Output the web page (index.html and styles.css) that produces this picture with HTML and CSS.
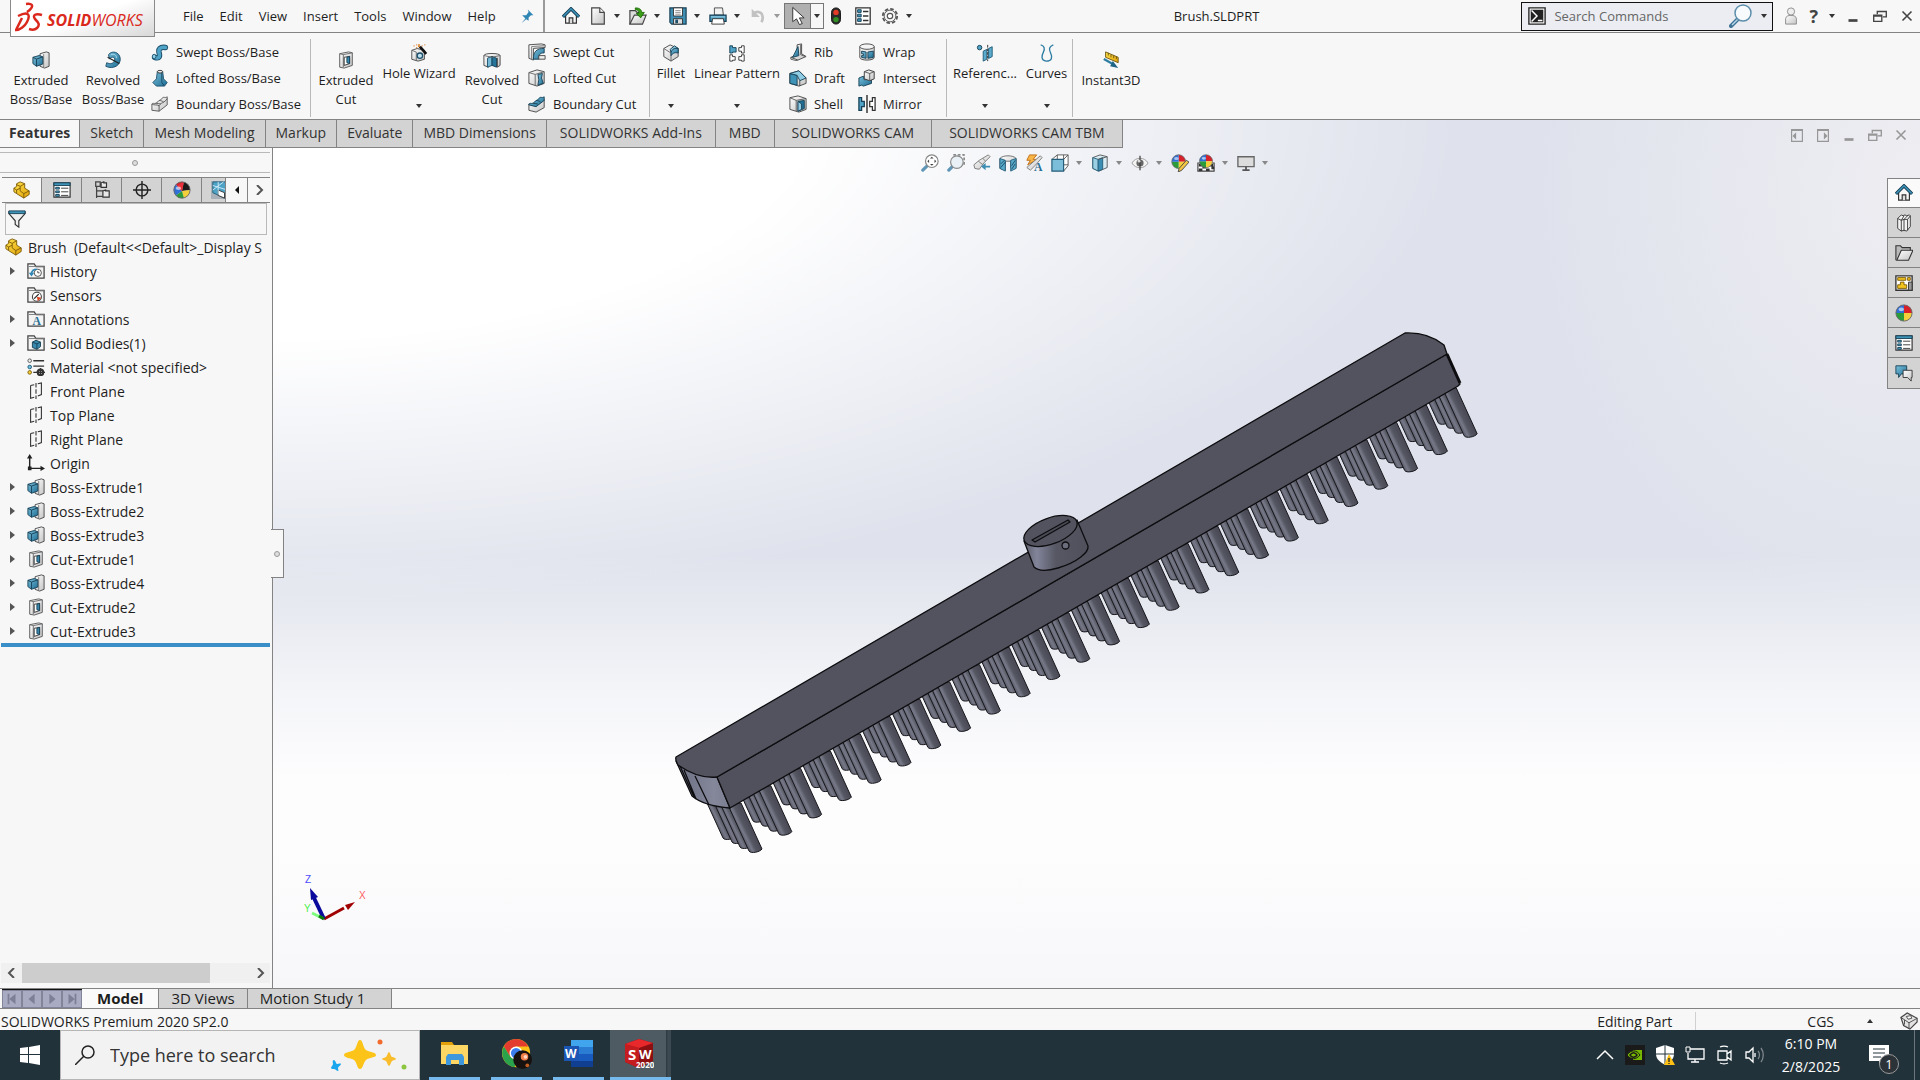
FILE: index.html
```html
<!DOCTYPE html>
<html lang="en">

<head>
    <meta charset="UTF-8">
    <meta name="viewport" content="width=device-width, initial-scale=1.0">
    <title>Brush.SLDPRT</title>
    <link rel="stylesheet" href="styles.css">
</head>

<body>
    <!-- icon sprite -->
    <svg class="sprite" aria-hidden="true">
        <defs>
            <linearGradient id="blue" x1="0" y1="0" x2="1" y2="1">
                <stop offset="0" stop-color="#7cc0dc" />
                <stop offset="1" stop-color="#1c6c93" />
            </linearGradient>
            <linearGradient id="grey" x1="0" y1="0" x2="1" y2="1">
                <stop offset="0" stop-color="#ffffff" />
                <stop offset="1" stop-color="#c4c4c4" />
            </linearGradient>
            <linearGradient id="gold" x1="0" y1="0" x2="1" y2="1">
                <stop offset="0" stop-color="#ffe34d" />
                <stop offset="1" stop-color="#e0a008" />
            </linearGradient>
        </defs>

        <symbol id="i-extrude" viewBox="0 0 20 20">
            <path d="M9 3l7-2 3 1v15l-5 2-5-2z" fill="url(#grey)" stroke="#444" />
            <path d="M13 3.500v15" stroke="#777" />
            <path d="M1 7l7-2 4 1.500v8L5 17l-4-3z" fill="url(#blue)" stroke="#173f55" />
            <path d="M1 7l4 2 7-2.500M5 9v8" fill="none" stroke="#173f55" />
        </symbol>
        <symbol id="i-revolve" viewBox="0 0 20 20">
            <path d="M5 4c4-5 12-3 13 4 1 8-8 13-16 9l1-4c4 2 8 1 9-3 0-4-4-4-6-1z" fill="url(#blue)" stroke="#1d4f6b" />
            <path d="M4 7l13 7" stroke="#222" stroke-width="1.300" />
            <path d="M8 4c4-1 6 1 6 4" fill="none" stroke="#b8e2f2" />
        </symbol>
        <symbol id="i-sweep" viewBox="0 0 20 20">
            <path d="M4 16c6 2 6-2 5-5-1-4 1-7 7-6" fill="none" stroke="#1d4f6b" stroke-width="6" stroke-linecap="round" />
            <path d="M4 16c6 2 6-2 5-5-1-4 1-7 7-6" fill="none" stroke="#4fa3c7" stroke-width="4" stroke-linecap="round" />
            <ellipse cx="3.500" cy="15" rx="2" ry="2.500" fill="#8fd0ea" stroke="#1d4f6b" />
        </symbol>
        <symbol id="i-loft" viewBox="0 0 20 20">
            <path d="M7 3h6l1 8 4 4-3 4-9 0-4-4 4-4z" fill="url(#blue)" stroke="#1d4f6b" />
            <path d="M12 3v12l3 4" fill="none" stroke="#174760" />
            <ellipse cx="10" cy="3" rx="3" ry="1.500" fill="#eee" stroke="#333" />
        </symbol>
        <symbol id="i-boundary" viewBox="0 0 20 20">
            <path d="M1 10c2-2 4 1 6-2s3-1 5-4 3 0 6-2v9l-9 7-8-1z" fill="url(#grey)" stroke="#555" />
            <path d="M1 10c3 2 5 0 8 2 2-4 6-3 9-8M9 12v6M5 9c2 0 4 1 6 1M9 6c2 0 4 1 5 2" fill="none" stroke="#555" />
        </symbol>
        <symbol id="i-boundary-cut" viewBox="0 0 20 20">
            <path d="M1 10l8 2 9-7v9l-9 5-8-2z" fill="url(#grey)" stroke="#444" />
            <path d="M1 10c2-2 4 1 6-2s3-1 5-4 3 0 6-2v4l-9 7-8-2z" fill="url(#blue)" stroke="#173f55" />
            <path d="M5 9c2 0 4 1 6 1M9 6c2 0 4 1 5 2" fill="none" stroke="#173f55" />
        </symbol>
        <symbol id="i-cut" viewBox="0 0 20 20">
            <path d="M3 3l10-2 4 1v14l-9 3-5-1z" fill="url(#grey)" stroke="#555" />
            <path d="M3 3l4 1v14M7 4l10-2" fill="none" stroke="#666" />
            <path d="M8 7l6-1v8l-6 2z" fill="#fff" stroke="#333" />
            <path d="M11 7l3-1v8l-3-1z" fill="#3889ad" stroke="#173f55" />
        </symbol>
        <symbol id="i-wizard" viewBox="0 0 20 20">
            <path d="M2 7l6-2 8 2v10l-7 2-7-2z" fill="url(#grey)" stroke="#444" />
            <path d="M2 7l5 2v10" fill="none" stroke="#666" />
            <circle cx="11" cy="13" r="3" fill="#bfe0ee" stroke="#1d4f6b" stroke-width="1.400" />
            <path d="M11 3l7 8" stroke="#111" stroke-width="3" />
            <path d="M4 2h1M7 1h1M7 4h1M13 2h1M16 1h1M10 0v2M9 3l2-1" stroke="#d87a1c" stroke-width="1.500" />
        </symbol>
        <symbol id="i-revcut" viewBox="0 0 20 20">
            <path d="M1 5c0-3 18-3 18 0v11l-3 2V8l-5 3-5-3v10l-5-2z" fill="url(#grey)" stroke="#444" />
            <path d="M5 8l5-2v10l-5 2z" fill="#73b9d6" stroke="#1d4f6b" />
            <path d="M10 6l5 2v10l-5-2z" fill="#25749a" stroke="#173f55" />
            <path d="M1 5l9 2 9-2" fill="none" stroke="#666" />
        </symbol>
        <symbol id="i-sweptcut" viewBox="0 0 20 20">
            <path d="M1 2l14-1 4 1v3L6 6v13l-5-2z" fill="url(#grey)" stroke="#444" />
            <path d="M4 4v14M4 4l14-1" fill="none" stroke="#777" />
            <path d="M6 18c0-8 3-12 12-12v5c-5 0-6 2-6 7z" fill="url(#blue)" stroke="#173f55" />
            <path d="M12 14h7v4h-7z" fill="#eee" stroke="#444" />
        </symbol>
        <symbol id="i-loftcut" viewBox="0 0 20 20">
            <path d="M1 4l9-3 8 2v13l-8 3-9-3z" fill="url(#grey)" stroke="#444" />
            <path d="M1 4l7 2v12M8 6l10-3" fill="none" stroke="#666" />
            <path d="M11 6l5-1-1 5 2 6-6 2 1-6z" fill="url(#blue)" stroke="#173f55" />
        </symbol>
        <symbol id="i-fillet" viewBox="0 0 20 20">
            <path d="M2 5l7-4 9 4v9l-8 5-8-5z" fill="url(#grey)" stroke="#444" />
            <path d="M2 5l8 5v9" fill="none" stroke="#666" />
            <path d="M10 10c0-3 2-6 8-5v5c-4-1-6 0-8 3z" fill="url(#blue)" stroke="#173f55" />
            <path d="M9 6l5-4 4 3c-4-1-6 0-8 4z" fill="#8fcbe3" stroke="#173f55" />
        </symbol>
        <symbol id="i-linpat" viewBox="0 0 20 20">
            <path d="M2 2h3v2h4v5H5v1H2z" fill="#4fa3c7" stroke="#173f55" />
            <path d="M18 2h-3v2h-3v4h3v2h3zM2 12h3v2h3v4H5v1H2zM18 12h-3v2h-3v4h3v1h3z" fill="#fff" stroke="#333" />
        </symbol>
        <symbol id="i-rib" viewBox="0 0 20 20">
            <path d="M9 2l5-1v11l5 3-9 4-8-3 7-3z" fill="url(#grey)" stroke="#444" />
            <path d="M10 4l1 10-7 2z" fill="url(#blue)" stroke="#173f55" />
            <path d="M13 2v11l5 2M2 16v2l8 2" fill="none" stroke="#555" />
        </symbol>
        <symbol id="i-draft" viewBox="0 0 20 20">
            <path d="M1 5l10-3 8 8v6l-8 3-10-3z" fill="url(#grey)" stroke="#444" />
            <path d="M1 5l8 2v11l-8-2z" fill="#3f93b7" stroke="#173f55" />
            <path d="M1 5l10-3 8 8-7 3-3-6z" fill="#8fcbe3" stroke="#173f55" />
            <path d="M12 13v6" stroke="#444" />
        </symbol>
        <symbol id="i-shell" viewBox="0 0 20 20">
            <path d="M1 3l9-2 9 3v12l-8 3-10-3z" fill="url(#grey)" stroke="#444" />
            <path d="M1 3l7 3v12M8 6l11-2" fill="none" stroke="#555" />
            <path d="M10 7l7-1v9l-7 3z" fill="#1f6f96" stroke="#173f55" />
            <path d="M10 7l4 3v6l-4 2z" fill="#8fcbe3" stroke="#173f55" />
        </symbol>
        <symbol id="i-wrap" viewBox="0 0 20 20">
            <path d="M2 4v12c0 4 16 4 16 0V4" fill="url(#grey)" stroke="#444" />
            <ellipse cx="10" cy="4" rx="8" ry="3" fill="#f4f4f4" stroke="#444" />
            <path d="M4 9l5 1v7l-5-1v-2h2v-2H4zM11 10l6-1v7l-6 1z" fill="url(#blue)" stroke="#173f55" />
        </symbol>
        <symbol id="i-intersect" viewBox="0 0 20 20">
            <path d="M1 10l5-2 1 4 8-1v5l-9 3-2-1-3 1z" fill="url(#blue)" stroke="#173f55" />
            <path d="M7 3l5-2 6 2v8l-5 2-6-2z" fill="url(#grey)" stroke="#333" />
            <path d="M7 3l6 2v8M13 5l5-2" fill="none" stroke="#555" />
        </symbol>
        <symbol id="i-mirror" viewBox="0 0 20 20">
            <path d="M1 3h3v4h3v6H4v4H1z" fill="#4fa3c7" stroke="#173f55" stroke-width="1.400" />
            <path d="M19 3h-3v4h-3v6h3v4h3z" fill="#fff" stroke="#333" stroke-width="1.400" />
            <path d="M10 0v20" stroke="#222" stroke-width="1.500" />
        </symbol>
        <symbol id="i-refgeo" viewBox="0 0 20 20">
            <circle cx="4" cy="4" r="2.500" fill="#4fa3c7" stroke="#173f55" />
            <path d="M8 8l4-2v11l-4 2zM14 5l4-2v11l-4 2z" fill="#5aabcd" stroke="#1d5877" />
            <path d="M13 1v18" stroke="#222" stroke-dasharray="3 1" />
        </symbol>
        <symbol id="i-curves" viewBox="0 0 20 20">
            <path d="M3 1c4 1 5 4 3 8s-3 9 3 10c7 0 7-5 5-9s-2-7 3-9" fill="none" stroke="#2e7ea3" stroke-width="1.500" />
        </symbol>
        <symbol id="i-instant" viewBox="0 0 20 20">
            <path d="M4 1l14 6v6L4 7z" fill="url(#gold)" stroke="#6d5310" />
            <path d="M7 2v3M10 4v3M13 5v3M16 6v3" stroke="#6d5310" />
            <path d="M2 9l11 6" stroke="#2e7ea3" stroke-width="2.500" />
            <path d="M12 11l6 8-9-2z" fill="#1f6385" />
        </symbol>

        <symbol id="i-pin" viewBox="0 0 20 20">
            <path d="M11 2l7 7-3 0-3 3 0 4-3-2-6 5 5-6-4-4 5 0 3-4z" fill="#2f86b3" />
        </symbol>
        <symbol id="i-home" viewBox="0 0 20 20">
            <path d="M4 9v9h12V9l-6-6z" fill="#f6f6f6" stroke="#333" stroke-width="1.300" />
            <path d="M8 18v-6h4v6" fill="#ddd" stroke="#333" stroke-width="1.300" />
            <path d="M1 11l9-9 9 9" fill="none" stroke="#153c52" stroke-width="3.600" />
            <path d="M1.500 10.500l8.500-8.500 8.500 8.500" fill="none" stroke="#3b93bb" stroke-width="1.800" />
        </symbol>
        <symbol id="i-new" viewBox="0 0 20 20">
            <path d="M3 1h9l5 5v13H3z" fill="url(#grey)" stroke="#444" stroke-width="1.300" />
            <path d="M12 1v5h5" fill="#fff" stroke="#444" stroke-width="1.300" />
        </symbol>
        <symbol id="i-open" viewBox="0 0 20 20">
            <path d="M1 19V4h6l2 2h4v4" fill="#ddd" stroke="#444" stroke-width="1.300" />
            <path d="M1 19L6 9h13l-4 10z" fill="url(#grey)" stroke="#444" stroke-width="1.300" />
            <path d="M7 1c5 0 7 2 7 5h3l-4 6-5-5h3c0-3-1-4-4-4z" fill="#3aa017" stroke="#1d6a08" />
        </symbol>
        <symbol id="i-save" viewBox="0 0 20 20">
            <path d="M1 1h18v18H3l-2-2z" fill="#3f8fb3" stroke="#173f55" stroke-width="1.300" />
            <path d="M5 1h10v9H5z" fill="#fff" stroke="#333" />
            <path d="M7 4h6M7 6h6M7 8h6" stroke="#888" />
            <path d="M5 13h10v6H5z" fill="#ddd" stroke="#333" />
            <path d="M7 14h3v4H7z" fill="#1d4f6b" />
        </symbol>
        <symbol id="i-print" viewBox="0 0 20 20">
            <path d="M6 9V1h9l1 8z" fill="#f2f2f2" stroke="#444" />
            <path d="M1 9h18v7H1z" fill="#4797ba" stroke="#173f55" stroke-width="1.300" />
            <path d="M4 13h12l1 6H3z" fill="#fff" stroke="#333" />
            <path d="M2 11h16" stroke="#a9dcf0" />
        </symbol>
        <symbol id="i-undo" viewBox="0 0 20 20">
            <path d="M5 7c6-4 13 0 9 10" fill="none" stroke="#c2c2c2" stroke-width="3" />
            <path d="M3 2v9h9z" fill="#c2c2c2" />
        </symbol>
        <symbol id="i-cursor" viewBox="0 0 20 20">
            <path d="M5 1v15l4-3 3 6 3-1-3-6h5z" fill="#fff" stroke="#333" />
        </symbol>
        <symbol id="i-traffic" viewBox="0 0 20 20">
            <rect x="5" y="1" width="10" height="18" rx="5" fill="#2b2b2b" stroke="#111" />
            <circle cx="10" cy="6" r="3" fill="#e33b27" />
            <circle cx="10" cy="14" r="3" fill="#2f8f22" />
        </symbol>
        <symbol id="i-options" viewBox="0 0 20 20">
            <path d="M2 1h16v18H2z" fill="#fff" stroke="#333" stroke-width="1.400" />
            <path d="M4 3h4v3H4zM4 8h4v3H4zM4 13h4v3H4z" fill="#3f93b7" stroke="#173f55" />
            <path d="M10 5h6M10 10h6M10 15h6" stroke="#333" stroke-width="1.400" />
        </symbol>
        <symbol id="i-gear" viewBox="0 0 20 20">
            <circle cx="10" cy="10" r="8" fill="none" stroke="#555" stroke-width="2" stroke-dasharray="4 2.280" />
            <circle cx="10" cy="10" r="6.500" fill="#f4f4f4" stroke="#555" />
            <circle cx="10" cy="10" r="3" fill="#fff" stroke="#555" stroke-width="1.300" />
        </symbol>
        <symbol id="i-prompt" viewBox="0 0 20 20">
            <path d="M1 1h18v18H1z" fill="#fff" stroke="#222" stroke-width="1.500" />
            <path d="M3 3h14v14H3z" fill="#222" />
            <path d="M4 4l6 6-6 6M11 15h5" fill="none" stroke="#fff" stroke-width="1.600" />
        </symbol>
        <symbol id="i-lens" viewBox="0 0 24 24">
            <path d="M9 15l-7 7" stroke="#3f7396" stroke-width="4" stroke-linecap="round" />
            <path d="M9 15l-6 6" stroke="#b6d8ea" stroke-width="1.500" />
            <circle cx="14" cy="9" r="8" fill="#f7fbfd" stroke="#5d8eab" stroke-width="1.500" />
        </symbol>
        <symbol id="i-user" viewBox="0 0 20 20">
            <path d="M4 19v-6c0-5 12-5 12 0v6z" fill="url(#grey)" stroke="#888" />
            <circle cx="10" cy="5" r="4" fill="#eee" stroke="#888" />
        </symbol>
        <symbol id="i-min" viewBox="0 0 20 20">
            <path d="M5 15h10" stroke="currentColor" stroke-width="3" />
        </symbol>
        <symbol id="i-restore" viewBox="0 0 20 20">
            <path d="M7 8V5h10v6h-4M7 5h10" fill="none" stroke="currentColor" stroke-width="1.500" />
            <path d="M3 9h9v7H3zM3 10h9" fill="none" stroke="currentColor" stroke-width="1.500" />
        </symbol>
        <symbol id="i-close" viewBox="0 0 20 20">
            <path d="M5 5l10 10M15 5L5 15" stroke="currentColor" stroke-width="1.800" />
        </symbol>
        <symbol id="i-pane-left" viewBox="0 0 20 20">
            <path d="M4 4h12v13H4zM4 5h12" fill="none" stroke="currentColor" stroke-width="1.300" />
            <path d="M9 7v8l-4-4z" fill="currentColor" />
        </symbol>
        <symbol id="i-pane-right" viewBox="0 0 20 20">
            <path d="M4 4h12v13H4zM4 5h12" fill="none" stroke="currentColor" stroke-width="1.300" />
            <path d="M11 7v8l4-4z" fill="currentColor" />
        </symbol>

        <symbol id="i-part" viewBox="0 0 20 20">
            <path d="M1 8l3-2V3l4-2 5 2v5l5 3v4l-6 4-8-5-3-2z" fill="url(#gold)" stroke="#7a5a08" />
            <path d="M4 4l4 2 5-3M8 6v5l4 3 6-3M12 14v5M1 8l3 2 4-2M4 10v4" fill="none" stroke="#7a5a08" />
        </symbol>
        <symbol id="i-props" viewBox="0 0 20 20">
            <path d="M1 2h18v16H1z" fill="#fff" stroke="#333" stroke-width="1.300" />
            <path d="M1 2h18v3H1z" fill="#3f93b7" stroke="#173f55" />
            <path d="M3 7h4v2H3zM3 11h4v2H3zM3 15h4v2H3z" fill="#4fa3c7" stroke="#173f55" />
            <path d="M9 8h8M9 12h8M9 16h8" stroke="#333" />
        </symbol>
        <symbol id="i-config" viewBox="0 0 20 20">
            <path d="M3 1h5v5H3zM4 6v13M4 11h7M4 17h7M8 4h3" fill="none" stroke="#444" stroke-width="1.400" />
            <path d="M9 7V2l3-1v1h3v5zM11 18v-7l3-1v1h4v7z" fill="#e8e8e8" stroke="#333" stroke-width="1.300" />
        </symbol>
        <symbol id="i-target" viewBox="0 0 20 20">
            <circle cx="10" cy="10" r="6.500" fill="none" stroke="#222" stroke-width="1.600" />
            <path d="M10 0v20M0 10h20" stroke="#222" stroke-width="1.600" />
        </symbol>
        <symbol id="i-ball" viewBox="0 0 20 20">
            <path d="M10 10V1a9 9 0 0 1 9 9z" fill="#d8202a" />
            <path d="M10 10h9a9 9 0 0 1-9 9z" fill="#f3cf3c" />
            <path d="M10 10v9a9 9 0 0 1-9-9z" fill="#2c9b3a" />
            <path d="M10 10H1a9 9 0 0 1 9-9z" fill="#2f6fd6" />
            <circle cx="10" cy="10" r="9" fill="none" stroke="#666" />
            <ellipse cx="7" cy="6" rx="3" ry="2" fill="#fff" opacity=".6" />
        </symbol>
        <symbol id="i-appearance" viewBox="0 0 20 20">
            <path d="M10 11L3 4a9 9 0 0 1 9-3z" fill="#d8202a" />
            <path d="M10 11l2-10a9 9 0 0 1 7 9z" fill="#1b1b1b" />
            <path d="M10 11l9-1a9 9 0 0 1-7 9z" fill="#f3cf3c" />
            <path d="M10 11l2 8a9 9 0 0 1-9-3z" fill="#2c9b3a" />
            <path d="M10 11l-7 5a9 9 0 0 1 0-12z" fill="#2f6fd6" />
            <path d="M10 11L5 7a7 7 0 0 1 7-5z" fill="#e8303a" />
            <circle cx="10" cy="10" r="9" fill="none" stroke="#666" />
            <ellipse cx="6" cy="8" rx="3" ry="2" fill="#fff" opacity=".6" />
        </symbol>
        <symbol id="i-cube" viewBox="0 0 20 20">
            <path d="M0 0h20v20H0z" fill="#a9b0b8" />
            <path d="M2 1h16v9l-3 9-13-6z" fill="#4fa3c7" stroke="#245d79" />
            <path d="M8 10l7 3v6l-7-3z" fill="#fff" stroke="#333" />
            <path d="M2 5l16 5M8 1v14M2 10l12-9" fill="none" stroke="#d4edf7" />
        </symbol>
        <symbol id="i-filter" viewBox="0 0 20 20">
            <path d="M1 2h18v2l-7 8v7l-4-3v-4L1 4z" fill="#f0f0f0" stroke="#333" stroke-width="1.300" />
            <path d="M1 1h18v3H1z" fill="#3f93b7" stroke="#173f55" />
        </symbol>
        <symbol id="i-folder" viewBox="0 0 20 20">
            <path d="M1 18V2h7l2 3h9v13z" fill="#f3f3f3" stroke="#444" stroke-width="1.400" />
            <path d="M2 5h17" stroke="#777" />
        </symbol>
        <symbol id="i-history" viewBox="0 0 20 20">
            <use href="#i-folder" />
            <circle cx="12" cy="12" r="4" fill="#fff" stroke="#444" />
            <path d="M12 10v2h2" fill="none" stroke="#444" />
            <path d="M5 14c0-5 3-6 6-6" fill="none" stroke="#2f86b3" stroke-width="1.800" />
            <path d="M2 12h6l-3 4z" fill="#2f86b3" />
        </symbol>
        <symbol id="i-sensors" viewBox="0 0 20 20">
            <use href="#i-folder" />
            <circle cx="11" cy="12" r="5" fill="#fff" stroke="#444" stroke-width="1.200" />
            <path d="M11 12l5 1-4 4z" fill="#d8431f" />
            <path d="M8 14l5-5" stroke="#222" stroke-width="1.400" />
        </symbol>
        <symbol id="i-bodies" viewBox="0 0 20 20">
            <use href="#i-folder" />
            <path d="M6 9l4-2 5 2v5l-4 3-5-2z" fill="#3889ad" stroke="#173f55" />
            <path d="M6 9l5 2v6M11 11l4-2" fill="none" stroke="#173f55" />
        </symbol>
        <symbol id="i-material" viewBox="0 0 20 20">
            <circle cx="3" cy="3" r="2" fill="#eee" stroke="#555" />
            <circle cx="3" cy="10" r="2" fill="#6fc0e0" stroke="#1d5877" />
            <circle cx="3" cy="16" r="2" fill="#f3cf3c" stroke="#7a5a08" />
            <path d="M7 3h12M7 9h12M7 16h4" stroke="#333" stroke-width="1.500" />
            <circle cx="15" cy="16" r="3" fill="none" stroke="#333" stroke-width="2.500" />
            <path d="M15 11v10M10 16h10" stroke="#333" stroke-width="1.500" />
        </symbol>
        <symbol id="i-plane" viewBox="0 0 20 20">
            <path d="M4 4l4-1M12 2l4-1v13l-4 1.500M8 17l-4 1V4" fill="none" stroke="#333" stroke-width="1.200" />
            <path d="M10 1v18" stroke="#333" stroke-width="1.200" stroke-dasharray="5 2" />
        </symbol>
        <symbol id="i-origin" viewBox="0 0 20 20">
            <path d="M3 3v13h14" fill="none" stroke="#222" stroke-width="1.600" />
            <path d="M3 0l3 5H0zM20 16l-5 3v-6zM1 14h4v4H1z" fill="#222" />
        </symbol>

        <symbol id="i-zoomfit" viewBox="0 0 20 20">
            <path d="M8 12l-6 6" stroke="#5f95b5" stroke-width="3.500" stroke-linecap="round" />
            <circle cx="12" cy="8" r="7" fill="#fff" stroke="#888" stroke-width="1.300" />
            <path d="M12 3l2 2h-4zM12 13l2-2h-4zM7 8l2-2v4zM17 8l-2-2v4z" fill="#444" />
        </symbol>
        <symbol id="i-zoomarea" viewBox="0 0 20 20">
            <path d="M7 1h12v12" fill="none" stroke="#666" stroke-dasharray="3 2" stroke-width="1.400" />
            <path d="M7 13l-5 5" stroke="#5f95b5" stroke-width="3.500" stroke-linecap="round" />
            <circle cx="11" cy="9" r="7" fill="#e9f1f6" stroke="#888" stroke-width="1.300" />
        </symbol>
        <symbol id="i-prev" viewBox="0 0 20 20">
            <path d="M1 12l6-5L17 1l2 2-7 7-5 7-5-1z" fill="url(#grey)" stroke="#777" />
            <path d="M6 8l5 4M11 5l3 3" stroke="#777" />
            <path d="M19 15h-5v3l-5-4 5-4v3h5z" fill="#3b8db4" />
        </symbol>
        <symbol id="i-section" viewBox="0 0 20 20">
            <path d="M1 5c3-4 15-4 18 0v10h-6V8H7v10l-6-2z" fill="url(#grey)" stroke="#666" />
            <path d="M1 5l6 2v12l-6-3zM13 7l6-2v11l-6 3z" fill="#5aaccd" stroke="#245d79" />
            <path d="M2 11l4-4M2 15l5-6M14 13l4-6M14 17l4-6" stroke="#174760" />
        </symbol>
        <symbol id="i-orient" viewBox="0 0 20 20">
            <path d="M1 6l6-5h12v12l-5 6M14 6l5-5M7 1v5M14 12h5M14 1v5" fill="#fff" stroke="#555" />
            <path d="M1 6h13v13H1z" fill="#7cbdd9" stroke="#245d79" stroke-width="1.300" />
        </symbol>
        <symbol id="i-style" viewBox="0 0 20 20">
            <path d="M2 4l8-3 8 2v12l-9 4-7-3z" fill="#d8ebf3" stroke="#555" />
            <path d="M2 4l6 2v13l-6-3z" fill="#9ccfe4" stroke="#245d79" />
            <path d="M8 6l5-2v13l-5 2z" fill="#3b8db4" stroke="#245d79" />
            <path d="M8 6l10-3" stroke="#555" />
        </symbol>
        <symbol id="i-eye" viewBox="0 0 20 20">
            <path d="M1 10c4-7 14-7 18 0-4 7-14 7-18 0z" fill="#f4f4f4" stroke="#999" />
            <circle cx="10" cy="10" r="4" fill="#666" />
            <path d="M10 2v16" stroke="#444" stroke-width="1.400" />
            <circle cx="9" cy="8" r="1.500" fill="#ddd" />
        </symbol>
        <symbol id="i-editapp" viewBox="0 0 20 20">
            <g transform="scale(.85)">
                <use href="#i-ball" width="20" height="20" />
            </g>
            <path d="M17 7l3 2-8 9-4 2 1-4z" fill="#f3c545" stroke="#444" />
        </symbol>
        <symbol id="i-scene" viewBox="0 0 20 20">
            <path d="M1 10h18v9H1z" fill="#fff" stroke="#444" stroke-width="1.300" />
            <path d="M2 11h4v3H2zM14 11h4v3h-4zM6 14h4v2H6zM10 16h4v3h-4zM2 16h4v3H2zM16 14h3v3h-3z" fill="#333" />
            <g transform="translate(2 0) scale(.8)">
                <use href="#i-ball" width="20" height="20" />
            </g>
        </symbol>
        <symbol id="i-monitor" viewBox="0 0 20 20">
            <path d="M1 3h18v11H1z" fill="#dcdcdc" stroke="#666" stroke-width="1.500" />
            <path d="M10 14v3M6 18h8" stroke="#555" stroke-width="2" />
        </symbol>

        <symbol id="i-books" viewBox="0 0 20 20">
            <path d="M3 5l4-4 2 1 2-1 2 1 3-1 1 1v12l-4 5-3-1-3 1-4-3z" fill="#f3f3f3" stroke="#333" />
            <path d="M3 5l4 2v12M7 7l3-1v13M10 6l4 0v12M7 7l3-5M10 6l4-4M14 6l3-4" fill="none" stroke="#333" />
        </symbol>
        <symbol id="i-folder-open" viewBox="0 0 20 20">
            <path d="M1 18V2h5l2 2h9v3" fill="#bbb" stroke="#333" stroke-width="1.200" />
            <path d="M2 18L7 7h13l-5 11z" fill="url(#grey)" stroke="#333" stroke-width="1.200" />
        </symbol>
        <symbol id="i-palette" viewBox="0 0 20 20">
            <path d="M1 2h18v16H1z" fill="#fff" stroke="#333" stroke-width="1.500" />
            <path d="M3 4h9v3H3zM14 4h3v3h-3zM6 9h4v3h3v4H3v-4h3z" fill="#f3c41e" stroke="#7a5a08" />
            <path d="M15 9h4v9h-4z" fill="#999" stroke="#333" />
        </symbol>
        <symbol id="i-forum" viewBox="0 0 20 20">
            <path d="M1 2h12v9H7l-3 4v-4H1z" fill="url(#blue)" stroke="#173f55" />
            <path d="M9 7h10v8h-1v4l-4-4H9z" fill="url(#grey)" stroke="#333" />
        </symbol>
        <symbol id="i-tag" viewBox="0 0 20 20">
            <path d="M1 6l7-5 11 6v4l-8 8-7-4z" fill="#e3e3e3" stroke="#444" stroke-width="1.300" />
            <path d="M1 6l9 6 9-5M10 12v6M5 9v5" fill="none" stroke="#444" />
            <path d="M7 5l5-1 1 3-4 1z" fill="#fff" stroke="#444" />
        </symbol>
    </svg>

    <header class="titlebar">
        <div class="logo">
            <svg class="logo-mark" viewBox="0 0 30 30">
                <path d="M11 2c8-1 8 3 1 8M3 14c10-5 13-2 9 6-2 4-7 8-11 8l6-12M27 13c-6-2-10 0-7 4 4 4 5 6 2 9-2 2-5 2-8 1" fill="none" stroke="#da291c" stroke-width="2.500" />
            </svg>
            <span><b>SOLID</b>WORKS</span>
        </div>
        <nav class="menu">
            <button>File</button>
            <button>Edit</button>
            <button>View</button>
            <button>Insert</button>
            <button>Tools</button>
            <button>Window</button>
            <button>Help</button>
        </nav>
        <button class="pin" aria-label="Pin menu"><svg class="icon"><use href="#i-pin" /></svg></button>
        <div class="quick">
            <button aria-label="Home"><svg class="icon"><use href="#i-home" /></svg></button>
            <button aria-label="New"><svg class="icon"><use href="#i-new" /></svg><i class="caret"></i></button>
            <button aria-label="Open"><svg class="icon"><use href="#i-open" /></svg><i class="caret"></i></button>
            <button aria-label="Save"><svg class="icon"><use href="#i-save" /></svg><i class="caret"></i></button>
            <button aria-label="Print"><svg class="icon"><use href="#i-print" /></svg><i class="caret"></i></button>
            <button aria-label="Undo"><svg class="icon"><use href="#i-undo" /></svg><i class="caret caret-dim"></i></button>
            <button class="select-tool" aria-label="Select"><svg class="icon"><use href="#i-cursor" /></svg><i class="caret"></i></button>
            <button aria-label="Rebuild"><svg class="icon"><use href="#i-traffic" /></svg></button>
            <button aria-label="File properties"><svg class="icon"><use href="#i-options" /></svg></button>
            <button aria-label="Options"><svg class="icon"><use href="#i-gear" /></svg><i class="caret"></i></button>
        </div>
        <h1 class="doc-title">Brush.SLDPRT</h1>
        <div class="command-search">
            <svg class="icon"><use href="#i-prompt" /></svg>
            <input type="text" placeholder="Search Commands" aria-label="Search Commands">
            <button aria-label="Search"><svg class="lens"><use href="#i-lens" /></svg></button>
            <i class="caret"></i>
        </div>
        <div class="window-controls">
            <button aria-label="Sign in"><svg class="icon"><use href="#i-user" /></svg></button>
            <button class="help">?<i class="caret"></i></button>
            <button aria-label="Minimize"><svg class="icon"><use href="#i-min" /></svg></button>
            <button aria-label="Restore"><svg class="icon"><use href="#i-restore" /></svg></button>
            <button aria-label="Close"><svg class="icon"><use href="#i-close" /></svg></button>
        </div>
    </header>

    <section class="ribbon">
        <div class="ribbon-group group-boss">
            <button class="tool"><svg class="icon"><use href="#i-extrude" /></svg>Extruded<br>Boss/Base</button>
            <button class="tool"><svg class="icon"><use href="#i-revolve" /></svg>Revolved<br>Boss/Base</button>
            <div class="stack">
                <button><svg class="icon"><use href="#i-sweep" /></svg>Swept Boss/Base</button>
                <button><svg class="icon"><use href="#i-loft" /></svg>Lofted Boss/Base</button>
                <button><svg class="icon"><use href="#i-boundary" /></svg>Boundary Boss/Base</button>
            </div>
        </div>
        <div class="ribbon-group group-cut">
            <button class="tool"><svg class="icon"><use href="#i-cut" /></svg>Extruded<br>Cut</button>
            <button class="tool tool-menu"><svg class="icon"><use href="#i-wizard" /></svg>Hole Wizard<i class="caret"></i></button>
            <button class="tool"><svg class="icon"><use href="#i-revcut" /></svg>Revolved<br>Cut</button>
            <div class="stack">
                <button><svg class="icon"><use href="#i-sweptcut" /></svg>Swept Cut</button>
                <button><svg class="icon"><use href="#i-loftcut" /></svg>Lofted Cut</button>
                <button><svg class="icon"><use href="#i-boundary-cut" /></svg>Boundary Cut</button>
            </div>
        </div>
        <div class="ribbon-group group-feature">
            <button class="tool tool-menu tool-small"><svg class="icon"><use href="#i-fillet" /></svg>Fillet<i class="caret"></i></button>
            <button class="tool tool-menu tool-wide"><svg class="icon"><use href="#i-linpat" /></svg>Linear Pattern<i class="caret"></i></button>
            <div class="stack">
                <button><svg class="icon"><use href="#i-rib" /></svg>Rib</button>
                <button><svg class="icon"><use href="#i-draft" /></svg>Draft</button>
                <button><svg class="icon"><use href="#i-shell" /></svg>Shell</button>
            </div>
            <div class="stack">
                <button><svg class="icon"><use href="#i-wrap" /></svg>Wrap</button>
                <button><svg class="icon"><use href="#i-intersect" /></svg>Intersect</button>
                <button><svg class="icon"><use href="#i-mirror" /></svg>Mirror</button>
            </div>
        </div>
        <div class="ribbon-group group-reference">
            <button class="tool tool-menu"><svg class="icon"><use href="#i-refgeo" /></svg>Referenc...<i class="caret"></i></button>
            <button class="tool tool-menu tool-small"><svg class="icon"><use href="#i-curves" /></svg>Curves<i class="caret"></i></button>
        </div>
        <div class="ribbon-group">
            <button class="tool"><svg class="icon"><use href="#i-instant" /></svg>Instant3D</button>
        </div>
    </section>

    <main class="workspace">
        <div class="tab-row">
            <nav class="command-tabs">
                <button class="active">Features</button>
                <button>Sketch</button>
                <button>Mesh Modeling</button>
                <button>Markup</button>
                <button>Evaluate</button>
                <button>MBD Dimensions</button>
                <button class="addin">SOLIDWORKS Add-Ins</button>
                <button class="addin">MBD</button>
                <button class="cam">SOLIDWORKS CAM</button>
                <button class="cam">SOLIDWORKS CAM TBM</button>
            </nav>
            <div class="doc-controls">
                <button aria-label="Collapse left"><svg class="icon"><use href="#i-pane-left" /></svg></button>
                <button aria-label="Collapse right"><svg class="icon"><use href="#i-pane-right" /></svg></button>
                <button aria-label="Minimize document"><svg class="icon"><use href="#i-min" /></svg></button>
                <button aria-label="Restore document"><svg class="icon"><use href="#i-restore" /></svg></button>
                <button aria-label="Close document"><svg class="icon"><use href="#i-close" /></svg></button>
            </div>
        </div>

        <div class="split">
            <aside class="manager">
                <div class="grip"><i class="dot"></i></div>
                <nav class="manager-tabs">
                    <button class="active" aria-label="FeatureManager"><svg class="icon"><use href="#i-part" /></svg></button>
                    <button aria-label="PropertyManager"><svg class="icon"><use href="#i-props" /></svg></button>
                    <button aria-label="ConfigurationManager"><svg class="icon"><use href="#i-config" /></svg></button>
                    <button aria-label="DimXpertManager"><svg class="icon"><use href="#i-target" /></svg></button>
                    <button aria-label="DisplayManager"><svg class="icon"><use href="#i-appearance" /></svg></button>
                    <button class="cropped" aria-label="CAM"><svg class="icon"><use href="#i-cube" /></svg></button>
                    <button class="scroll-tabs" aria-label="Previous tab"><i class="arrow-left"></i></button>
                    <button class="more-tabs" aria-label="Next tab"><svg class="chevron" viewBox="0 0 10 10"><path d="M3 0l5 5-5 5" /></svg></button>
                </nav>
                <label class="filter">
                    <svg class="icon"><use href="#i-filter" /></svg>
                    <input type="text" aria-label="Filter">
                </label>
                <ul class="tree">
                    <li class="root"><svg class="icon"><use href="#i-part" /></svg>Brush&nbsp; (Default&lt;&lt;Default&gt;_Display S</li>
                    <li><button class="twist" aria-label="Expand"></button><svg class="icon"><use href="#i-history" /></svg>History</li>
                    <li class="leaf"><svg class="icon"><use href="#i-sensors" /></svg>Sensors</li>
                    <li><button class="twist" aria-label="Expand"></button><svg class="icon" viewBox="0 0 20 20"><use href="#i-folder" /><text class="letter" x="6" y="17">A</text></svg>Annotations</li>
                    <li><button class="twist" aria-label="Expand"></button><svg class="icon"><use href="#i-bodies" /></svg>Solid Bodies(1)</li>
                    <li class="leaf"><svg class="icon"><use href="#i-material" /></svg>Material &lt;not specified&gt;</li>
                    <li class="leaf"><svg class="icon"><use href="#i-plane" /></svg>Front Plane</li>
                    <li class="leaf"><svg class="icon"><use href="#i-plane" /></svg>Top Plane</li>
                    <li class="leaf"><svg class="icon"><use href="#i-plane" /></svg>Right Plane</li>
                    <li class="leaf"><svg class="icon"><use href="#i-origin" /></svg>Origin</li>
                    <li><button class="twist" aria-label="Expand"></button><svg class="icon"><use href="#i-extrude" /></svg>Boss-Extrude1</li>
                    <li><button class="twist" aria-label="Expand"></button><svg class="icon"><use href="#i-extrude" /></svg>Boss-Extrude2</li>
                    <li><button class="twist" aria-label="Expand"></button><svg class="icon"><use href="#i-extrude" /></svg>Boss-Extrude3</li>
                    <li><button class="twist" aria-label="Expand"></button><svg class="icon"><use href="#i-cut" /></svg>Cut-Extrude1</li>
                    <li><button class="twist" aria-label="Expand"></button><svg class="icon"><use href="#i-extrude" /></svg>Boss-Extrude4</li>
                    <li><button class="twist" aria-label="Expand"></button><svg class="icon"><use href="#i-cut" /></svg>Cut-Extrude2</li>
                    <li><button class="twist" aria-label="Expand"></button><svg class="icon"><use href="#i-cut" /></svg>Cut-Extrude3</li>
                </ul>
                <div class="hscroll">
                    <button aria-label="Scroll left"><svg class="chevron" viewBox="0 0 10 10"><path d="M7 0L2 5l5 5" /></svg></button>
                    <div class="track"><div class="thumb"></div></div>
                    <button aria-label="Scroll right"><svg class="chevron" viewBox="0 0 10 10"><path d="M3 0l5 5-5 5" /></svg></button>
                </div>
                <div class="panel-handle"><i class="dot"></i></div>
            </aside>

            <section class="viewport">
                <div class="heads-up">
                    <button aria-label="Zoom to fit"><svg class="icon"><use href="#i-zoomfit" /></svg></button>
                    <button aria-label="Zoom to area"><svg class="icon"><use href="#i-zoomarea" /></svg></button>
                    <button aria-label="Previous view"><svg class="icon"><use href="#i-prev" /></svg></button>
                    <button aria-label="Section view"><svg class="icon"><use href="#i-section" /></svg></button>
                    <button aria-label="Dynamic annotation"><svg class="icon" viewBox="0 0 20 20"><path d="M5 1h8l-4 5h5L3 12l3-5H2z" fill="#f7b64a" stroke="#c06a10" /><path d="M2 15L17 2l2 2-7 8-6 6z" fill="url(#grey)" stroke="#777" /><text class="letter" x="10" y="19">A</text></svg></button>
                    <button aria-label="View orientation"><svg class="icon"><use href="#i-orient" /></svg><i class="caret"></i></button>
                    <button aria-label="Display style"><svg class="icon"><use href="#i-style" /></svg><i class="caret"></i></button>
                    <button aria-label="Hide and show items"><svg class="icon"><use href="#i-eye" /></svg><i class="caret"></i></button>
                    <button aria-label="Edit appearance"><svg class="icon"><use href="#i-editapp" /></svg></button>
                    <button aria-label="Apply scene"><svg class="icon"><use href="#i-scene" /></svg><i class="caret"></i></button>
                    <button aria-label="View settings"><svg class="icon"><use href="#i-monitor" /></svg><i class="caret"></i></button>
                </div>

                <svg class="model" viewBox="273 148 1647 840">
                    <defs>
                        <linearGradient id="rod" gradientUnits="userSpaceOnUse" x1="-6" y1="-2" x2="4" y2="-7">
                            <stop offset="0" stop-color="#565864" />
                            <stop offset=".3" stop-color="#777989" />
                            <stop offset=".6" stop-color="#555762" />
                            <stop offset="1" stop-color="#4b4c57" />
                        </linearGradient>
                        <linearGradient id="cap" x1="0" y1="0" x2="1" y2="0">
                            <stop offset="0" stop-color="#5c5d6a" />
                            <stop offset=".2" stop-color="#82849a" />
                            <stop offset=".5" stop-color="#565763" />
                            <stop offset="1" stop-color="#4f505b" />
                        </linearGradient>
                        <linearGradient id="end" x1="0" y1="0" x2="1" y2="0">
                            <stop offset="0" stop-color="#6b6d80" />
                            <stop offset=".7" stop-color="#85879a" />
                            <stop offset="1" stop-color="#7b7d90" />
                        </linearGradient>
                        <path id="bristle" d="M-27-48L-6-2C-4 1 5-1 7-4L-14-50z" fill="url(#rod)" stroke="#17171c" />
                        <g id="tuft">
                            <use href="#bristle" x="-26" y="-13" />
                            <use href="#bristle" x="-17" y="-9" />
                            <use href="#bristle" x="-9" y="-4" />
                            <use href="#bristle" />
                        </g>
                        <g id="tufts">
                            <use href="#tuft" x="119.200" y="-69.200" />
                            <use href="#tuft" x="89.400" y="-51.900" />
                            <use href="#tuft" x="59.600" y="-34.600" />
                            <use href="#tuft" x="29.800" y="-17.300" />
                            <use href="#tuft" />
                        </g>
                    </defs>
                    <use href="#tufts" x="1351" y="507" />
                    <use href="#tufts" x="1202" y="593.500" />
                    <use href="#tufts" x="1053" y="680" />
                    <use href="#tufts" x="904" y="766.500" />
                    <use href="#tufts" x="755" y="853" />
                    <g stroke="#0d0d10" stroke-width="1.300" stroke-linejoin="round">
                        <path d="M676 761L692 796Q704 806 730 808L717 777z" fill="url(#end)" />
                        <path d="M684 770l12 29M695 776l14 29M680 766l14 31" fill="none" />
                        <path d="M717 777L1447 354 1460 384 1458 386 730 808z" fill="#50515c" />
                        <path d="M676 757L1405 333Q1428 332 1444 345L1447 354 717 777Q698 779 678 765 675 760 676 757z" fill="#52535e" />
                        <path d="M1447 354l13 29" fill="none" stroke-width="3" />
                        <path d="M1024 541L1034 567Q1040 573 1058 568C1078 562 1089 552 1088 546L1077 520z" fill="url(#cap)" />
                        <ellipse cx="1050.500" cy="531" rx="28" ry="13" transform="rotate(-20 1050.500 531)" fill="#52535e" />
                        <path d="M1032 540l36-20 2 2-35 20z" fill="#4a4b56" />
                        <circle cx="1065.500" cy="545.500" r="3.500" fill="#6b6d7c" />
                    </g>
                </svg>

                <svg class="triad" viewBox="0 0 70 60">
                    <path d="M24 49l20-11" stroke="#a00000" stroke-width="3" />
                    <path d="M55 32l-7 8-3-5z" fill="#a00000" />
                    <path d="M24 49L14 28" stroke="#0a0a9c" stroke-width="4" />
                    <path d="M10 18l8 9-7 3z" fill="#0a0a9c" />
                    <path d="M22 48l-10-5" stroke="#7dff7d" stroke-width="3" />
                    <path d="M24 49l-5-3" stroke="#0b7a0b" stroke-width="3" />
                    <text x="5" y="13" fill="#4b4bff">Z</text>
                    <text x="59" y="29" fill="#ff5f5f">X</text>
                    <text x="4" y="42" fill="#4bf04b">Y</text>
                </svg>

                <nav class="task-pane">
                    <button class="active" aria-label="Resources"><svg class="icon"><use href="#i-home" /></svg></button>
                    <button aria-label="Design library"><svg class="icon"><use href="#i-books" /></svg></button>
                    <button aria-label="File explorer"><svg class="icon"><use href="#i-folder-open" /></svg></button>
                    <button aria-label="View palette"><svg class="icon"><use href="#i-palette" /></svg></button>
                    <button aria-label="Appearances"><svg class="icon"><use href="#i-ball" /></svg></button>
                    <button aria-label="Custom properties"><svg class="icon"><use href="#i-props" /></svg></button>
                    <button aria-label="Forum"><svg class="icon"><use href="#i-forum" /></svg></button>
                </nav>
            </section>
        </div>
    </main>

    <nav class="view-tabs">
        <div class="tab-nav">
            <button aria-label="First"><svg viewBox="0 0 16 16"><path d="M3 2h2v12H3zM12 2v12L5 8z" /></svg></button>
            <button aria-label="Previous"><svg viewBox="0 0 16 16"><path d="M11 2v12L4 8z" /></svg></button>
            <button aria-label="Next"><svg viewBox="0 0 16 16"><path d="M5 2v12l7-6z" /></svg></button>
            <button aria-label="Last"><svg viewBox="0 0 16 16"><path d="M11 2h2v12h-2zM4 2v12l7-6z" /></svg></button>
        </div>
        <button class="active">Model</button>
        <button>3D Views</button>
        <button class="motion">Motion Study 1</button>
    </nav>

    <footer class="status">
        <span>SOLIDWORKS Premium 2020 SP2.0</span>
        <span class="mode">Editing Part</span>
        <button class="units">CGS<i class="caret-up"></i></button>
        <button class="tag" aria-label="Tags"><svg class="icon"><use href="#i-tag" /></svg></button>
    </footer>

    <div class="taskbar">
        <button class="start" aria-label="Start">
            <svg viewBox="0 0 20 20"><path d="M0 3l8-1v7H0zM9 2l11-2v9H9zM0 10h8v8l-8-1zM9 10h11v10L9 18z" fill="#fff" /></svg>
        </button>
        <label class="os-search">
            <svg class="search-glass" viewBox="0 0 20 20"><circle cx="13" cy="7" r="6" /><path d="M9 11l-9 9" /></svg>
            <input type="text" placeholder="Type here to search" aria-label="Type here to search">
            <svg class="sparkles" viewBox="0 0 78 34">
                <path d="M31 2c3 0 3 8 6 10s10 2 10 5-7 2-10 5-3 9-6 9-3-7-6-9-10-2-10-5 7-3 10-5 3-10 6-10z" fill="#fcc419" />
                <path d="M60 14c1 0 2 5 3 5s4 1 4 2-3 1-4 2-2 5-3 5-2-4-3-5-4-1-4-2 3-1 4-2 2-5 3-5z" fill="#f9bd2b" />
                <path d="M5 22c2 1 2 4 3 4s4-1 4 0-3 3-3 4 1 3 0 3-3-2-4-2-3 0-3-1 2-3 2-4-1-4 1-4z" fill="#1aa7ee" />
                <circle cx="51" cy="4" r="2.500" fill="#f26b2c" />
                <circle cx="75" cy="29" r="2.500" fill="#8cc63f" />
            </svg>
        </label>
        <div class="apps">
            <button aria-label="File Explorer">
                <svg viewBox="0 0 30 30"><path d="M1 3h11l2 3H1z" fill="#e3a008" /><path d="M1 6h27v19H1z" fill="#fdd663" /><path d="M6 26v-8l2-3h14l2 3v8h-5v-5h-8v5z" fill="#3f97dc" /></svg>
            </button>
            <button aria-label="Chrome">
                <svg viewBox="0 0 32 32">
                    <circle cx="15" cy="15" r="15" fill="#fbc116" />
                    <path d="M15 0a15 15 0 0 1 13 8H15l-6 11L2 8a15 15 0 0 1 13-8z" fill="#e33b2e" />
                    <path d="M2 8l7 11 8 4-4 7A15 15 0 0 1 2 8z" fill="#2ba24c" />
                    <circle cx="15" cy="15" r="7" fill="#fff" />
                    <circle cx="15" cy="15" r="5.500" fill="#3b7ded" />
                    <circle cx="22" cy="22" r="10" fill="#17120f" />
                    <circle cx="24" cy="19" r="4" fill="#f07f4a" />
                    <circle cx="25" cy="19" r="2" fill="#ffd7c2" />
                    <circle cx="27" cy="28" r="2" fill="#c25f22" />
                </svg>
            </button>
            <button aria-label="Word">
                <svg viewBox="0 0 30 30"><path d="M7 1h22v7H7z" fill="#41a5ee" /><path d="M7 8h22v7H7z" fill="#2b7cd3" /><path d="M7 15h22v7H7z" fill="#185abd" /><path d="M7 22h22v6H7z" fill="#103f91" /><path d="M0 7h15v15H0z" fill="#1c56b5" /><text class="app-letter" x="1" y="19" font-size="12">W</text></svg>
            </button>
            <button class="running" aria-label="SOLIDWORKS 2020">
                <svg viewBox="0 0 30 30">
                    <path d="M1 5l14-5 14 4v18l-14 7L1 23z" fill="#8c0f12" />
                    <path d="M1 5l14 4v20L1 23z" fill="#c51c1f" />
                    <path d="M1 5l14-5 14 4-14 5z" fill="#e8282b" />
                    <text class="app-letter" x="4" y="21" font-size="15">S</text>
                    <text class="app-letter" x="15" y="20" font-size="13">W</text>
                    <text class="app-letter" x="12" y="29" font-size="8">2020</text>
                </svg>
            </button>
        </div>
        <div class="tray">
            <button aria-label="Show hidden icons"><svg viewBox="0 0 20 20"><path d="M2 14l8-8 8 8" fill="none" stroke="#fff" stroke-width="1.500" /></svg></button>
            <button aria-label="Graphics"><svg viewBox="0 0 20 20"><path d="M0 0h20v20H0z" fill="#1a1a1a" /><path d="M8 5h9v10H8z" fill="#76b900" /><path d="M2 10c4-6 10-5 13 0-4 5-9 5-13 0z" fill="#76b900" stroke="#1a1a1a" /><path d="M5 10c2-3 5-3 7 0-2 3-5 3-7 0z" fill="none" stroke="#1a1a1a" stroke-width="1.400" /></svg></button>
            <button aria-label="Security"><svg viewBox="0 0 20 20"><path d="M10 0l9 3v6c0 5-4 8-9 11C5 17 1 14 1 9V3z" fill="#fff" /><path d="M10 0v20M1 9h18" stroke="#24333b" /><path d="M14 9l6 11H9z" fill="#fdc116" /><path d="M14 13v4M14 18v1" stroke="#222" stroke-width="1.300" /></svg></button>
            <button aria-label="Network"><svg viewBox="0 0 20 20"><path d="M5 4h14v10H5M3 8v6h2M10 14v3M6 17h8" fill="none" stroke="#fff" stroke-width="1.300" /><path d="M1 2h4v5H1z" fill="none" stroke="#fff" /></svg></button>
            <button aria-label="Meet now"><svg viewBox="0 0 20 20"><path d="M3 6h9v9H3zM12 9l4-3v9l-4-3M5 2c2-1 6-1 8 0M5 18c2 1 6 1 8 0" fill="none" stroke="#fff" stroke-width="1.300" /></svg></button>
            <button aria-label="Volume"><svg viewBox="0 0 20 20"><path d="M1 7h3l4-4v14l-4-4H1z" fill="none" stroke="#fff" stroke-width="1.300" /><path d="M10 8v4" stroke="#fff" stroke-width="1.300" /><path d="M13 6c2 2 2 6 0 8M16 3c3 4 3 10 0 14" fill="none" stroke="#7d878c" stroke-width="1.300" /></svg></button>
        </div>
        <div class="clock">6:10 PM<br>2/8/2025</div>
        <button class="notify" aria-label="Notifications">
            <svg viewBox="0 0 20 20"><path d="M0 0h20v16h-7l-3 4v-4H0z" fill="#fff" /><path d="M4 4h12M4 8h12M4 12h8" stroke="#24333b" /></svg>
            <span class="badge">1</span>
        </button>
    </div>
</body>

</html>
```
FILE: styles.css
```css
* {
    box-sizing: border-box;
}

body {
    margin: 0;
    height: 100vh;
    display: flex;
    flex-direction: column;
    overflow: hidden;
    font-family: "Open Sans", "Noto Sans", sans-serif;
    font-size: 13px;
    color: #1e1e1e;
    background-color: #f7f7f7;
}

button,
input {
    font: inherit;
    color: inherit;
    background: none;
    border: none;
    padding: 0;
    margin: 0;
    white-space: nowrap;
}

.sprite {
    position: absolute;
    width: 0;
    height: 0;
}

.icon {
    width: 18px;
    height: 18px;
    flex-shrink: 0;
    display: block;
    overflow: visible;
}

.letter {
    font-family: "Liberation Serif", serif;
    font-size: 13px;
    font-weight: bold;
    fill: #2a6f92;
}

.app-letter {
    font-weight: bold;
    fill: #fff;
}

.caret,
.caret-up {
    width: 0;
    height: 0;
    flex-shrink: 0;
    border-left: 3px solid transparent;
    border-right: 3px solid transparent;
    border-top: 4px solid #333;
}

.caret-up {
    border-top: none;
    border-bottom: 4px solid #333;
}

.caret-dim {
    border-top-color: #999;
}

/* Title bar */
.titlebar {
    height: 33px;
    flex-shrink: 0;
    display: flex;
    align-items: center;
    border-bottom: 1px solid #838383;
    padding-left: 10px;
}

.logo {
    position: relative;
    z-index: 2;
    align-self: flex-start;
    width: 145px;
    height: 37px;
    flex-shrink: 0;
    display: flex;
    align-items: center;
    border: 1px solid #8a8a8a;
    border-top: none;
    background: linear-gradient(160deg, #fff 50%, #d8d8d8);
    color: #da291c;
    font-size: 16px;
    font-style: italic;
    padding: 4px 0 0 4px;
    gap: 2px;
}

.logo-mark {
    width: 30px;
    height: 30px;
    margin-top: -6px;
}

.menu {
    display: flex;
    gap: 16px;
    padding-left: 28px;
}

.pin {
    padding-left: 23px;
}

.pin .icon {
    width: 16px;
    height: 16px;
}

.quick {
    display: flex;
    align-items: center;
    align-self: stretch;
    gap: 9px;
    margin-left: 8px;
    padding-left: 17px;
    border-left: 2px solid #9a9a9a;
}

.quick button {
    display: flex;
    align-items: center;
    gap: 7px;
}

.quick .select-tool {
    height: 26px;
    gap: 0;
    margin: 0 -6px 0 -5px;
    border: 1px solid #777;
}

.select-tool .icon {
    width: 26px;
    height: 24px;
    padding: 2px 3px;
    background-color: #b0b0b0;
    border-right: 1px solid #777;
}

.select-tool .caret {
    margin: 0 3px;
}

.doc-title {
    flex: 1;
    margin: 0;
    text-align: center;
    font-size: 13px;
    font-weight: normal;
}

.command-search {
    width: 252px;
    height: 29px;
    display: flex;
    align-items: center;
    gap: 8px;
    padding: 0 5px 0 6px;
    border: 1px solid #111;
    background-color: #ebedf2;
}

.command-search input {
    flex: 1;
    min-width: 0;
    outline: none;
}

.command-search input::placeholder {
    color: #666;
    opacity: 1;
}

.lens {
    display: block;
    width: 24px;
    height: 24px;
}

.window-controls {
    display: flex;
    align-items: center;
    gap: 9px;
    padding: 0 4px 0 9px;
    color: #444;
}

.window-controls button {
    display: flex;
    align-items: center;
}

.window-controls .help {
    font-size: 18px;
    font-weight: bold;
    gap: 11px;
}

/* Ribbon */
.ribbon {
    height: 86px;
    flex-shrink: 0;
    display: flex;
}

.ribbon-group {
    display: flex;
    padding: 0 1px;
}

.ribbon-group:not(:last-child)::after {
    content: "";
    width: 1px;
    margin: 6px 0 2px auto;
    background-color: #b9b9b9;
}

.group-boss {
    width: 312px;
    padding-left: 5px;
}

.group-cut {
    width: 339px;
    padding-left: 0;
}

.group-feature {
    width: 297px;
    padding-left: 0;
}

.tool {
    width: 72px;
    padding-top: 18px;
    display: flex;
    flex-direction: column;
    align-items: center;
    line-height: 19px;
}

.tool .icon {
    margin-bottom: 2px;
}

.tool-menu {
    padding: 11px 0;
}

.tool-menu .caret {
    margin-top: auto;
}

.group-cut .tool {
    width: 68px;
}

.group-cut .tool-menu {
    width: 78px;
}

.tool-small {
    width: 40px;
}

.tool-wide {
    width: 92px;
}

.group-reference .tool-small {
    width: 51px;
}

.stack {
    padding: 6px 7px 0 2px;
    display: flex;
    flex-direction: column;
}

.group-feature .stack {
    padding: 6px 7px 0 6px;
}

.stack button {
    height: 26px;
    display: flex;
    align-items: center;
    gap: 7px;
}

/* Workspace */
.workspace {
    flex: 1;
    min-height: 0;
    display: flex;
    flex-direction: column;
    border-top: 1px solid #838383;
    background:
        linear-gradient(to bottom, transparent 50%, #f4f5f8 66%, #fdfdfe 76%, #fdfdfe 84%, #f7f7f9),
        radial-gradient(ellipse 62% 56% at 14% 0, #fff 45%, rgba(255, 255, 255, 0)),
        radial-gradient(ellipse 20% 50% at 100% 8%, #eeeef2, rgba(238, 238, 242, 0)),
        #dfe2ec;
}

.tab-row {
    display: flex;
    align-items: flex-start;
    justify-content: space-between;
    height: 28px;
}

.command-tabs {
    display: flex;
    height: 28px;
    border-bottom: 1px solid #838383;
    font-size: 14px;
}

.command-tabs button {
    padding: 0 10px 2px;
    background-color: #d3d3d3;
    border-right: 1px solid #838383;
    color: #333;
}

.command-tabs .active {
    font-weight: bold;
    background-color: #f7f7f7;
    padding: 0 9px 2px;
}

.command-tabs .addin {
    padding: 0 13px 2px;
}

.command-tabs .cam {
    padding: 0 17px 2px;
}

.doc-controls {
    display: flex;
    gap: 8px;
    padding: 6px 10px 0 0;
    color: #979797;
}

.split {
    flex: 1;
    min-height: 0;
    display: flex;
}

/* Left manager panel */
.manager {
    position: relative;
    width: 273px;
    flex-shrink: 0;
    display: flex;
    flex-direction: column;
    background-color: #f7f7f7;
    border-right: 1px solid #838383;
}

.dot {
    width: 6px;
    height: 6px;
    border: 1px solid #999;
    border-radius: 50%;
    background-color: #ddd;
}

.grip {
    height: 21px;
    margin: 4px 2px 4px 0;
    display: flex;
    align-items: center;
    justify-content: center;
    border-top: 1px solid #b9b9b9;
    border-bottom: 1px solid #b9b9b9;
}

.manager-tabs {
    display: flex;
    height: 26px;
    margin: 0 2px 0 2px;
    border-top: 1px solid #838383;
    border-bottom: 1px solid #838383;
}

.manager-tabs button {
    width: 40px;
    display: flex;
    align-items: center;
    justify-content: center;
    background-color: #d3d3d3;
    border-right: 1px solid #838383;
}

.manager-tabs .active {
    background-color: #f7f7f7;
}

.manager-tabs .cropped {
    width: 24px;
    padding-left: 9px;
    justify-content: flex-start;
    overflow: hidden;
}

.manager-tabs .scroll-tabs,
.manager-tabs .more-tabs {
    width: 22px;
    background-color: #f7f7f7;
}

.manager-tabs .more-tabs {
    border: none;
}

.arrow-left {
    border-top: 4px solid transparent;
    border-bottom: 4px solid transparent;
    border-right: 4px solid #111;
}

.chevron {
    width: 10px;
    height: 10px;
    fill: none;
    stroke: #555;
    stroke-width: 2;
}

.filter {
    height: 32px;
    margin: 0 5px 0 5px;
    padding-left: 2px;
    display: flex;
    align-items: center;
    border: 1px solid #b9b9b9;
}

.filter input {
    flex: 1;
    min-width: 0;
    height: 28px;
    outline: none;
}

.tree {
    list-style: none;
    margin: 0 2px 0 1px;
    padding: 0;
    font-size: 14px;
    border-bottom: 4px solid #3a8fc8;
}

.tree li {
    height: 24px;
    display: flex;
    align-items: center;
    gap: 5px;
    white-space: nowrap;
}

.tree .root {
    padding-left: 4px;
}

.tree .leaf {
    padding-left: 26px;
}

.twist {
    width: 5px;
    height: 8px;
    margin: 0 7px 0 9px;
    border-top: 4px solid transparent;
    border-bottom: 4px solid transparent;
    border-left: 5px solid #555;
}

.hscroll {
    height: 20px;
    margin: auto 2px 5px 1px;
    display: flex;
    background-color: #f0f0f0;
}

.hscroll button {
    width: 21px;
    display: flex;
    align-items: center;
    justify-content: center;
}

.track {
    flex: 1;
}

.thumb {
    width: 83%;
    height: 20px;
    background-color: #cdcdcd;
}

.panel-handle {
    position: absolute;
    left: 271px;
    top: 381px;
    width: 13px;
    height: 49px;
    z-index: 1;
    display: flex;
    align-items: center;
    justify-content: center;
    background-color: #f7f7f7;
    border: 1px solid #838383;
    border-left: none;
}

/* Graphics area */
.viewport {
    position: relative;
    flex: 1;
    min-width: 0;
}

.model {
    display: block;
    width: 100%;
    height: 100%;
}

.heads-up {
    position: absolute;
    top: 6px;
    left: 0;
    right: 4px;
    display: flex;
    justify-content: center;
    gap: 8px;
}

.heads-up button {
    display: flex;
    align-items: center;
    gap: 7px;
}

.heads-up .caret {
    margin-right: 1px;
    border-top-color: #888;
}

.triad {
    position: absolute;
    left: 27px;
    bottom: 58px;
    width: 70px;
    height: 60px;
    font-family: "Liberation Sans", sans-serif;
    font-size: 10px;
}

.task-pane {
    position: absolute;
    top: 30px;
    right: 0;
    width: 33px;
    display: flex;
    flex-direction: column;
    border: 1px solid #838383;
    border-right: none;
}

.task-pane button {
    height: 30px;
    display: flex;
    align-items: center;
    justify-content: center;
    background-color: #d3d3d3;
    border-bottom: 1px solid #838383;
}

.task-pane .active {
    height: 29px;
    background-color: #fafafa;
}

.task-pane button:last-child {
    border-bottom: none;
}

/* Model and motion tabs */
.view-tabs {
    height: 21px;
    flex-shrink: 0;
    display: flex;
    border-top: 1px solid #838383;
    border-bottom: 1px solid #838383;
    font-size: 15px;
    line-height: 17px;
    padding-left: 2px;
}

.view-tabs > button {
    padding: 0 12px 1px;
    background-color: #d3d3d3;
    border-right: 1px solid #838383;
}

.view-tabs > .active {
    font-weight: bold;
    padding: 0 15px 1px;
    background-color: #fafafa;
}

.view-tabs > .motion {
    padding-right: 26px;
}

.tab-nav {
    display: flex;
    border-top: 1px solid #111;
}

.tab-nav button {
    width: 20px;
    display: flex;
    justify-content: center;
    align-items: center;
    background-color: #a9abc2;
    border: 1px solid #82849a;
}

.tab-nav svg {
    width: 14px;
    height: 14px;
    fill: #7d7f96;
}

/* Status bar */
.status {
    height: 21px;
    flex-shrink: 0;
    display: flex;
    align-items: center;
    font-size: 14px;
    padding: 3px 2px 0 1px;
}

.mode {
    margin-left: auto;
    padding-right: 23px;
    border-right: 1px solid #d0d0d0;
}

.units {
    display: flex;
    align-items: center;
    gap: 33px;
    padding: 0 27px 0 111px;
}

/* Taskbar */
.taskbar {
    height: 50px;
    flex-shrink: 0;
    display: flex;
    align-items: center;
    background-color: #22323a;
    color: #fff;
}

.start {
    width: 60px;
}

.start svg {
    width: 20px;
    height: 20px;
    display: block;
    margin: auto;
}

.os-search {
    width: 360px;
    height: 50px;
    display: flex;
    align-items: center;
    gap: 15px;
    padding: 0 12px 0 14px;
    background-color: #f2f2f2;
    border: 1px solid #b5b5b5;
    color: #333;
    font-size: 18px;
}

.os-search input {
    flex: 1;
    min-width: 0;
    outline: none;
}

.os-search input::placeholder {
    color: #333;
    opacity: 1;
}

.search-glass {
    width: 20px;
    height: 20px;
    fill: none;
    stroke: #222;
    stroke-width: 1.5;
}

.sparkles {
    width: 78px;
    height: 34px;
}

.apps {
    align-self: stretch;
    display: flex;
    gap: 11px;
    padding-left: 9px;
}

.apps button {
    width: 51px;
    border-bottom: 3px solid #76b9ed;
    display: flex;
    align-items: center;
    justify-content: center;
}

.apps svg {
    width: 30px;
    height: 30px;
}

.apps .running {
    width: 61px;
    margin-left: -5px;
    padding-right: 4px;
    background: linear-gradient(to right, #4f5b62 56px, #2b383f 56px, #3c4950 58px);
}

.tray {
    margin-left: auto;
    display: flex;
    gap: 10px;
}

.tray svg {
    display: block;
    width: 20px;
    height: 20px;
}

.clock {
    width: 92px;
    font-size: 14px;
    line-height: 23px;
    text-align: center;
}

.notify {
    position: relative;
    align-self: stretch;
    margin: 0 5px 0 12px;
    padding-right: 25px;
    border-right: 1px solid #6b767c;
}

.notify svg {
    display: block;
    width: 20px;
    height: 20px;
}

.badge {
    position: absolute;
    left: 10px;
    top: 24px;
    width: 20px;
    height: 20px;
    border: 1px solid #999;
    border-radius: 50%;
    background-color: #2b3338;
    font-size: 13px;
    line-height: 18px;
    text-align: center;
}
```
